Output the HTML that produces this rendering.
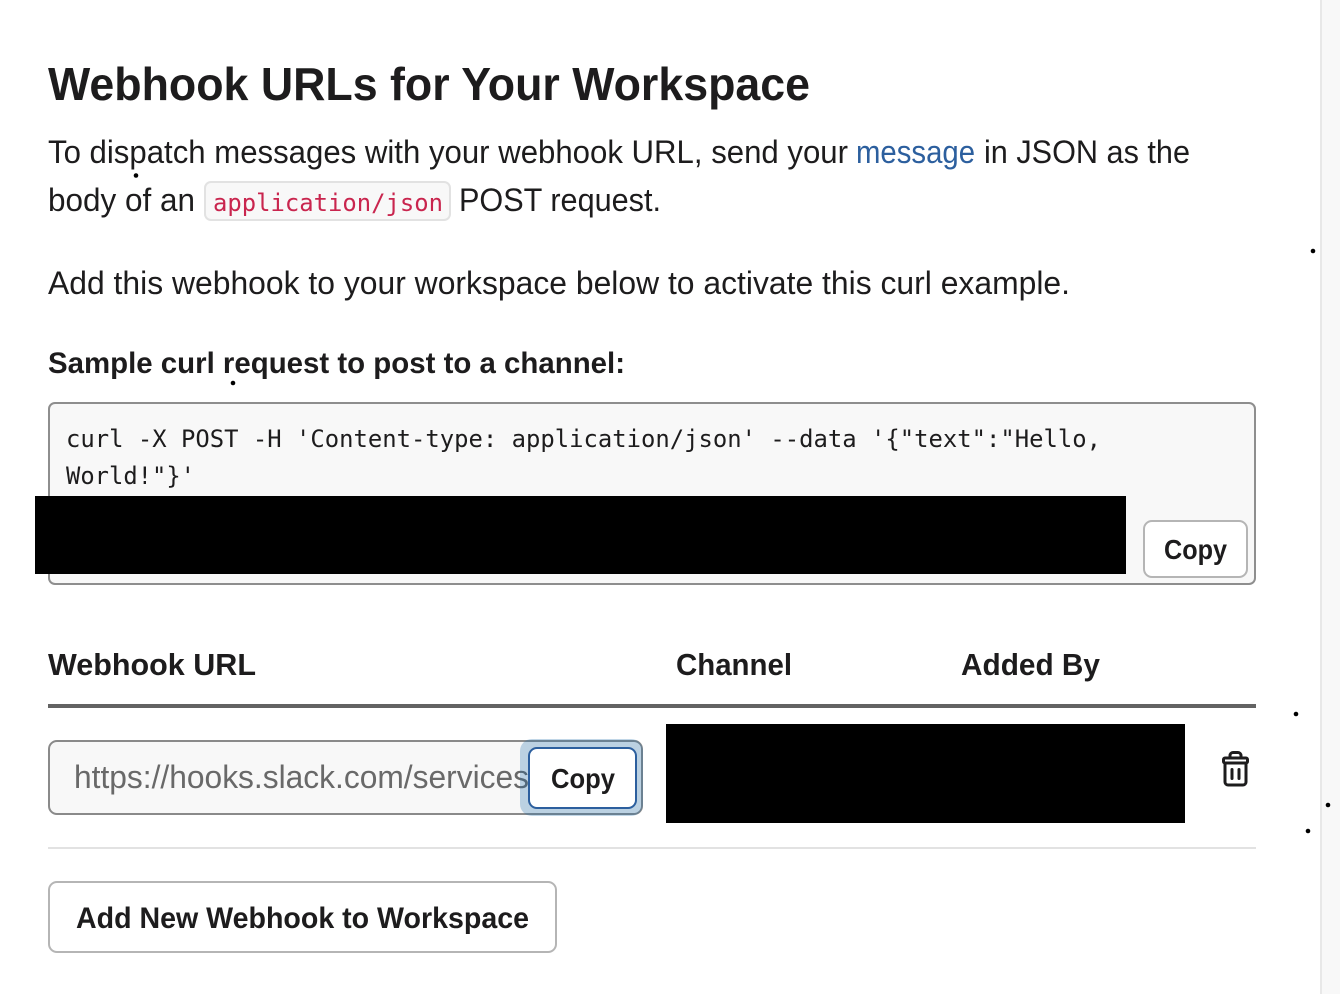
<!DOCTYPE html>
<html><head><meta charset="utf-8"><style>
html,body{margin:0;padding:0;background:#fff;width:1340px;height:994px;overflow:hidden}
svg{display:block}
text{font-family:"Liberation Sans",sans-serif;fill:#1d1c1d;white-space:pre}
.m{font-family:"DejaVu Sans Mono","Liberation Mono",monospace;font-size:24px}
.b{font-weight:bold}
</style></head><body>
<svg width="1340" height="994" viewBox="0 0 1340 994" xmlns="http://www.w3.org/2000/svg">
<rect x="1320" y="0" width="2" height="994" fill="#e8e8e8"/>
<rect x="1322" y="0" width="18" height="994" fill="#f8f8f8"/>

<text class="b" x="48" y="100" font-size="46" textLength="762" lengthAdjust="spacingAndGlyphs">Webhook URLs for Your Workspace</text>
<text x="48" y="163" font-size="32" textLength="800" lengthAdjust="spacingAndGlyphs">To dispatch messages with your webhook URL, send your</text>
<text x="856" y="163" font-size="32" style="fill:#2c5f9e" textLength="119" lengthAdjust="spacingAndGlyphs">message</text>
<text x="984" y="163" font-size="32" textLength="206" lengthAdjust="spacingAndGlyphs">in JSON as the</text>
<text x="48" y="211" font-size="32" textLength="147" lengthAdjust="spacingAndGlyphs">body of an</text>
<rect x="205" y="182" width="245" height="38" rx="6" fill="#f8f8f8" stroke="#e2e2e2" stroke-width="2"/>
<text class="m" x="213" y="211" style="fill:#c9254e" textLength="230" lengthAdjust="spacingAndGlyphs">application/json</text>
<text x="459" y="211" font-size="32" textLength="202" lengthAdjust="spacingAndGlyphs">POST request.</text>
<text x="48" y="294" font-size="32" textLength="1022" lengthAdjust="spacingAndGlyphs">Add this webhook to your workspace below to activate this curl example.</text>
<text class="b" x="48" y="373" font-size="30" textLength="577" lengthAdjust="spacingAndGlyphs">Sample curl request to post to a channel:</text>

<rect x="49" y="403" width="1206" height="181" rx="6" fill="#f8f8f8" stroke="#8e8e8e" stroke-width="2"/>
<text class="m" x="66" y="447" textLength="1035" lengthAdjust="spacingAndGlyphs">curl -X POST -H 'Content-type: application/json' --data '{"text":"Hello,</text>
<text class="m" x="66" y="484" textLength="129" lengthAdjust="spacingAndGlyphs">World!"}'</text>
<rect x="35" y="496" width="1091" height="78" fill="#000"/>
<rect x="1144" y="521" width="103" height="56" rx="8" fill="#fff" stroke="#b5b5b5" stroke-width="2"/>
<text class="b" x="1164" y="559" font-size="28" textLength="63" lengthAdjust="spacingAndGlyphs">Copy</text>

<text class="b" x="48" y="675" font-size="31" textLength="208" lengthAdjust="spacingAndGlyphs">Webhook URL</text>
<text class="b" x="676" y="675" font-size="31" textLength="116" lengthAdjust="spacingAndGlyphs">Channel</text>
<text class="b" x="961" y="675" font-size="31" textLength="139" lengthAdjust="spacingAndGlyphs">Added By</text>
<rect x="48" y="704" width="1208" height="4" fill="#636363"/>

<rect x="49" y="741" width="593" height="73" rx="8" fill="#f8f8f8" stroke="#8a8a8a" stroke-width="2"/>
<text x="74" y="788" font-size="32" style="fill:#696969" textLength="455" lengthAdjust="spacingAndGlyphs">https://hooks.slack.com/services</text>
<rect x="520" y="739" width="123" height="77" rx="12" fill="#1d6aaa" fill-opacity=".28"/>
<rect x="529" y="748" width="107" height="60" rx="8" fill="#fff" stroke="#2c5f9e" stroke-width="2"/>
<text class="b" x="551" y="788" font-size="28" textLength="64" lengthAdjust="spacingAndGlyphs">Copy</text>

<rect x="666" y="724" width="519" height="99" fill="#000"/>

<g fill="none" stroke="#1d1c1d" stroke-width="3" stroke-linecap="round" stroke-linejoin="round">
<path d="M1230 758v-2.500a3 3 0 0 1 3-3h5a3 3 0 0 1 3 3v2.500"/>
<path d="M1225 758h21a1.500 1.500 0 0 1 1.500 1.500v2a1.500 1.500 0 0 1-1.500 1.500h-21a1.500 1.500 0 0 1-1.500-1.500v-2a1.500 1.500 0 0 1 1.500-1.500z"/>
<path d="M1225 763v19a3 3 0 0 0 3 3h15a3 3 0 0 0 3-3v-19"/>
<path d="M1232 769.500v9M1239 769.500v9"/>
</g>

<rect x="48" y="847" width="1208" height="2" fill="#e2e2e2"/>
<rect x="49" y="882" width="507" height="70" rx="8" fill="#fff" stroke="#b5b5b5" stroke-width="2"/>
<text class="b" x="76" y="928" font-size="30" textLength="453" lengthAdjust="spacingAndGlyphs">Add New Webhook to Workspace</text>

<g fill="#000">
<circle cx="136" cy="175.500" r="2.300"/>
<circle cx="233" cy="383" r="2.300"/>
<circle cx="1313" cy="251" r="2.300"/>
<circle cx="1296" cy="714" r="2.300"/>
<circle cx="1328" cy="805" r="2.300"/>
<circle cx="1308" cy="831" r="2.300"/>
</g>
</svg>
</body></html>
